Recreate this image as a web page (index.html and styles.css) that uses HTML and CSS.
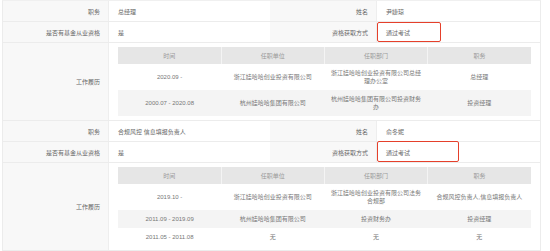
FILE: index.html
```html
<!DOCTYPE html>
<html lang="zh-CN">
<head>
<meta charset="utf-8">
<link rel="stylesheet" href="styles.css">
</head>
<body>
<div class="sheet">
  <div class="row">
    <div class="lbl">职务</div><div class="val">总经理</div>
    <div class="lbl">姓名</div><div class="val">尹婕琼</div>
  </div>
  <div class="row">
    <div class="lbl">是否有基金从业资格</div><div class="val">是</div>
    <div class="lbl">资格获取方式</div><div class="val mark"><span class="hl hl-a"></span>通过考试</div>
  </div>
  <div class="row wide">
    <div class="lbl">工作履历</div>
    <div class="box">
      <table class="hist">
        <thead><tr><th>时间</th><th>任职单位</th><th>任职部门</th><th>职务</th></tr></thead>
        <tbody>
          <tr><td>2020.09 -</td><td>浙江娃哈哈创业投资有限公司</td><td>浙江娃哈哈创业投资有限公司总经理办公室</td><td>总经理</td></tr>
          <tr><td>2000.07 - 2020.08</td><td>杭州娃哈哈集团有限公司</td><td>杭州娃哈哈集团有限公司投资财务办</td><td>投资经理</td></tr>
        </tbody>
      </table>
    </div>
  </div>
  <div class="row">
    <div class="lbl">职务</div><div class="val">合规风控 信息填报负责人</div>
    <div class="lbl">姓名</div><div class="val">俞冬妮</div>
  </div>
  <div class="row">
    <div class="lbl">是否有基金从业资格</div><div class="val">是</div>
    <div class="lbl">资格获取方式</div><div class="val mark"><span class="hl hl-b"></span>通过考试</div>
  </div>
  <div class="row wide">
    <div class="lbl">工作履历</div>
    <div class="box">
      <table class="hist">
        <thead><tr><th>时间</th><th>任职单位</th><th>任职部门</th><th>职务</th></tr></thead>
        <tbody>
          <tr><td>2019.10 -</td><td>浙江娃哈哈创业投资有限公司</td><td>浙江娃哈哈创业投资有限公司法务合规部</td><td>合规风控负责人,信息填报负责人</td></tr>
          <tr><td>2011.09 - 2019.09</td><td>杭州娃哈哈集团有限公司</td><td>投资财务办</td><td>投资经理</td></tr>
          <tr><td>2011.05 - 2011.08</td><td>无</td><td>无</td><td>无</td></tr>
        </tbody>
      </table>
    </div>
  </div>
</div>
</body>
</html>
```
FILE: styles.css
```css
html, body {
  margin: 0;
  padding: 0;
  background: #fff;
}
body {
  font-family: "Liberation Sans", "Noto Sans CJK SC", sans-serif;
  font-size: 6px;
  color: #666;
}
.sheet {
  margin-left: 2px;
  width: 539px;
  box-sizing: border-box;
  border-left: 1px solid #ececec;
  border-right: 1px solid #ececec;
  border-top: 1px solid #f0f0f0;
  border-bottom: 1px solid #ececec;
}
.row {
  display: grid;
  grid-template-columns: 106px 161px 107px 1fr;
  border-bottom: 1px solid #ececec;
}
.row.wide {
  grid-template-columns: 106px 1fr;
}
.lbl {
  background: #f8f8f8;
  border-right: 1px solid #eeeeee;
  padding-right: 8px;
  display: flex;
  align-items: center;
  justify-content: flex-end;
  height: 20px;
  box-sizing: border-box;
}
.row.wide .lbl {
  height: auto;
}
.val {
  display: flex;
  align-items: center;
  padding-left: 9px;
  height: 20px;
  box-sizing: border-box;
}
.mark {
  position: relative;
}
.hl {
  position: absolute;
  left: 0;
  top: 0;
  height: 20px;
  box-sizing: border-box;
  border: 1.5px solid #e5402b;
  border-radius: 2px;
}
.hl-a { width: 64px; }
.hl-b { width: 82px; top: -1px; height: 21px; }
.box {
  padding: 4px 9px 4px 9px;
}
.hist {
  width: 100%;
  table-layout: fixed;
  border-collapse: collapse;
  text-align: center;
  line-height: 8px;
}
.hist th {
  background: #e6e6e6;
  color: #999;
  font-weight: normal;
  padding: 4.5px 4px;
  border-left: 1px solid #f4f4f4;
}
.hist th:first-child {
  border-left: none;
}
.hist td {
  padding: 5px 4px;
  color: #777;
}
.hist tbody tr:nth-child(even) td {
  background: #f4f4f4;
}
```
